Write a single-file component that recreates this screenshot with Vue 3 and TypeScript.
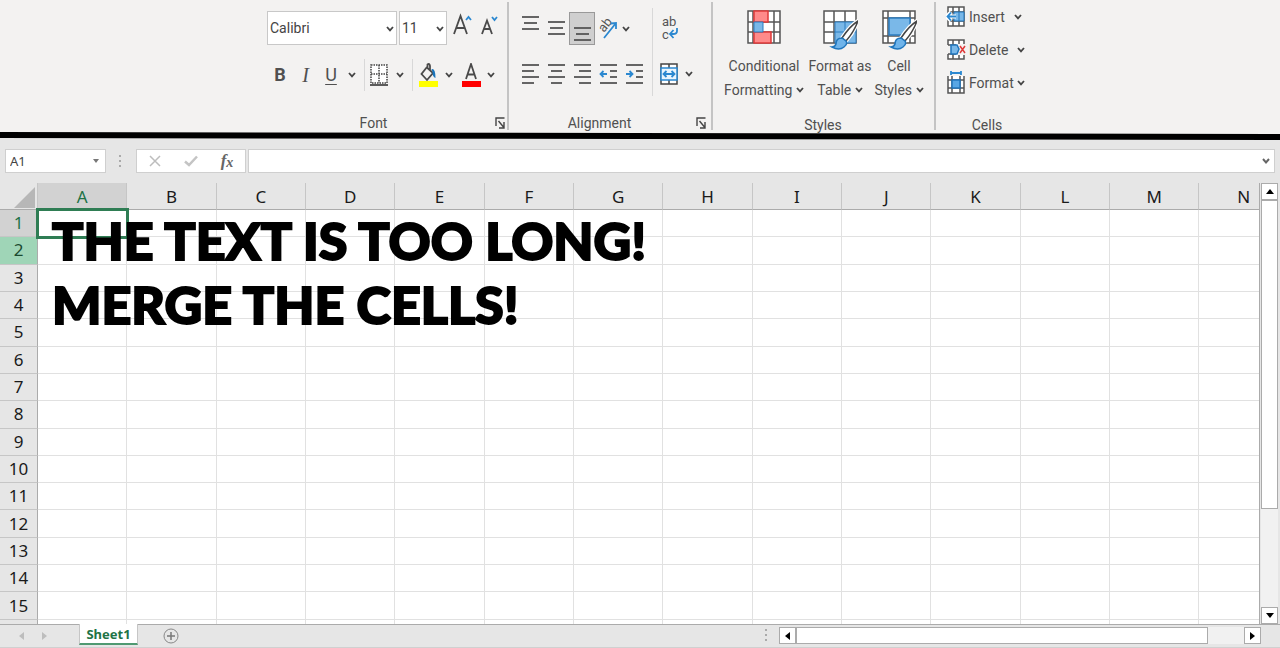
<script setup lang="ts">
import { h, ref } from 'vue'

type Bar = [x1: number, x2: number, y: number]

const Chevron = () =>
  h('svg', { class: 'chev', viewBox: '0 0 8 6', 'aria-hidden': 'true' }, [h('path', { d: 'M1 1l3 3.4L7 1' })])

const Lines = (props: { bars: Bar[]; arrow?: string }) =>
  h('svg', { class: 'lines', viewBox: '0 0 18 34', 'aria-hidden': 'true' }, [
    ...props.bars.map(([a, b, y]) => h('path', { d: `M${a} ${y}H${b}` })),
    props.arrow ? h('path', { d: props.arrow, stroke: '#2b88d0' }) : null,
  ])
Lines.props = ['bars', 'arrow']

const Launcher = () =>
  h('svg', { class: 'launcher', viewBox: '0 0 10 12', 'aria-hidden': 'true' }, [
    h('path', { d: 'M1 9V1H9.5M3.5 4L8.5 10M9 5V11H4' }),
  ])

const vertical: { label: string; on?: boolean; bars: Bar[] }[] = [
  { label: 'Top Align', bars: [[1, 18, 5], [3, 16, 11], [1, 18, 17]] },
  { label: 'Middle Align', bars: [[1, 18, 10], [3, 16, 16], [1, 18, 22]] },
  { label: 'Bottom Align', on: true, bars: [[1, 18, 16], [3, 16, 22], [1, 18, 28]] },
]

const horizontal: { label: string; arrow?: string; bars: Bar[] }[] = [
  { label: 'Align Left', bars: [[1, 18, 7], [1, 13, 13], [1, 18, 19], [1, 13, 25]] },
  { label: 'Center', bars: [[1, 18, 7], [4, 15, 13], [1, 18, 19], [4, 15, 25]] },
  { label: 'Align Right', bars: [[1, 18, 7], [6, 18, 13], [1, 18, 19], [6, 18, 25]] },
  { label: 'Decrease Indent', arrow: 'M1.5 16H8M4.5 13L1.5 16L4.5 19', bars: [[1, 18, 7], [11, 18, 13], [11, 18, 19], [1, 18, 25]] },
  { label: 'Increase Indent', arrow: 'M1 16H7.5M4.5 13L7.5 16L4.5 19', bars: [[1, 18, 7], [11, 18, 13], [11, 18, 19], [1, 18, 25]] },
]

const columns = 'ABCDEFGHIJKLMN'.split('')
const rows = Array.from({ length: 16 }, (_, i) => i + 1)

const font = ref('Calibri')
const size = ref('11')
const cell = ref('A1')
const formula = ref('')
</script>

<template>
  <div class="app">
    <header class="ribbon">
      <section class="group font">
        <div class="row font-top">
          <label class="pick">
            <select v-model="font" aria-label="Font"><option>Calibri</option></select>
            <Chevron />
          </label>
          <label class="pick">
            <select v-model="size" aria-label="Font size"><option>11</option></select>
            <Chevron />
          </label>
          <button class="grow" aria-label="Increase font size">
            <svg width="20" height="34" viewBox="0 0 20 34"><path class="ink" d="M2 23L8.500 5L15 23M4.500 17H12.500" /><path class="blue" d="M14 9l2.500-3 2.500 3" /></svg>
          </button>
          <button class="grow" aria-label="Decrease font size">
            <svg width="20" height="34" viewBox="0 0 20 34"><path class="ink" d="M2 23L7 9.500L12 23M4 18H10" /><path class="blue" d="M12 6l2.500 3 2.500-3" /></svg>
          </button>
        </div>
        <div class="row font-bottom">
          <button class="b">B</button>
          <button class="i">I</button>
          <button class="u">U</button>
          <button aria-label="Underline options"><Chevron /></button>
          <span class="sep"></span>
          <button aria-label="Borders">
            <svg width="20" height="24" viewBox="0 0 20 24">
              <path d="M2 2H18V20H2ZM10 2V20M2 11H18" fill="#fff" stroke="#444" stroke-width="1.500" stroke-dasharray="1.500 1" />
              <path class="ink" d="M1 22H19" />
            </svg>
          </button>
          <button aria-label="Border options"><Chevron /></button>
          <span class="sep"></span>
          <button aria-label="Fill color">
            <svg width="20" height="24" viewBox="0 0 20 24">
              <path class="ink" d="M9 4L3.500 11L9 17L15 10L9.500 5V1.500Q11.500 0 12 3V8" />
              <path d="M13.500 6Q17.500 5 17.500 15Q14.500 14 14.500 9Z" fill="#1b75bb" />
              <rect x="1" y="18" width="19" height="6" fill="#ff0" />
            </svg>
          </button>
          <button aria-label="Fill color options"><Chevron /></button>
          <button aria-label="Font color">
            <svg width="20" height="24" viewBox="0 0 20 24">
              <path class="ink" d="M5 16L10 1L15 16M6.500 11.500H13.500" />
              <rect x="1" y="18" width="19" height="6" fill="#f00" />
            </svg>
          </button>
          <button aria-label="Font color options"><Chevron /></button>
        </div>
        <footer><span>Font</span><button aria-label="Font settings"><Launcher /></button></footer>
      </section>

      <section class="group align">
        <div class="align-body">
          <div class="align-main">
            <div class="row align-top">
              <button v-for="v in vertical" :key="v.label" :aria-label="v.label" :class="{ on: v.on }"><Lines :bars="v.bars" /></button>
              <button aria-label="Orientation">
                <svg class="open" width="20" height="26" viewBox="0 0 20 26">
                  <text x="0" y="0" transform="translate(6 17) rotate(-52)" class="glyph">ab</text>
                  <path class="blue" d="M6 22L18 7M12.500 7.500L18 7V13" />
                </svg>
              </button>
              <button aria-label="Orientation options"><Chevron /></button>
            </div>
            <div class="row align-bottom">
              <button v-for="a in horizontal" :key="a.label" :aria-label="a.label"><Lines :bars="a.bars" :arrow="a.arrow" /></button>
            </div>
          </div>
          <span class="sep tall"></span>
          <div class="align-side">
            <div class="row">
              <button aria-label="Wrap Text">
                <svg class="open" width="20" height="28" viewBox="0 0 20 28">
                  <text x="3" y="12" class="glyph">ab</text><text x="3" y="25" class="glyph">c</text>
                  <path class="blue" d="M18 14V17Q18 20 14 20H11M14.500 16L11 20L14.500 24" />
                </svg>
              </button>
            </div>
            <div class="row">
              <button aria-label="Merge and Center">
                <svg width="20" height="24" viewBox="0 0 20 24">
                  <path d="M2 2H18V22H2ZM10 2V22" fill="#fff" stroke="#444" stroke-width="1.500" />
                  <path d="M2 6H18V18H2Z" fill="#eaf5fd" stroke="#2b88d0" stroke-width="1.500" />
                  <path class="blue" d="M4.500 12H15.500M7.500 9L4.500 12L7.500 15M12.500 9L15.500 12L12.500 15" />
                </svg>
              </button>
              <button aria-label="Merge options"><Chevron /></button>
            </div>
          </div>
        </div>
        <footer><span>Alignment</span><button aria-label="Alignment settings"><Launcher /></button></footer>
      </section>

      <section class="group styles">
        <div class="styles-body">
          <button>
            <svg width="36" height="42" viewBox="0 0 36 42">
              <path class="grid" d="M2 2H34V34H2ZM7 2V34M28 2V34M2 13H34M2 23H34" />
              <path d="M8 2H22V13H8Z M8 23H25V34H8Z" fill="#ff8a8a" stroke="#e03a3a" stroke-width="1.500" />
              <path d="M8 13H17V23H8Z" fill="#7ab8e8" stroke="#2b7cc0" />
            </svg>
            <span>Conditional<br>Formatting <Chevron /></span>
          </button>
          <button>
            <svg width="36" height="42" viewBox="0 0 36 42">
              <path class="grid" d="M2 2H34V34H2ZM12 2V34M23 2V34M2 13H34M2 23H34" />
              <path d="M13 13H34V34H13Z" fill="#7ab8e8" stroke="#2b7cc0" /><path d="M23 13V34M13 23H34" stroke="#2b7cc0" />
              <path d="M36 12Q28 17 20 29L24 32Q32 23 36 12Z" fill="#fff" stroke="#fff" stroke-width="4" />
              <path class="brush" d="M36 12Q28 17 20 29L24 32Q32 23 36 12Z" />
              <path d="M20 29Q14 29 14 35Q13 38 10 38Q17 42 22 38Q26 35 24 32Z" fill="#6fb4ea" stroke="#2076bd" stroke-width="1.500" />
            </svg>
            <span>Format as<br>Table <Chevron /></span>
          </button>
          <button>
            <svg width="36" height="42" viewBox="0 0 36 42">
              <path class="grid" d="M2 2H34V34H2ZM7 2V34M29 2V34M2 9H34M2 27H34" />
              <path d="M8 9H29V26H8Z" fill="#7ab8e8" stroke="#2b7cc0" stroke-width="1.500" />
              <path d="M36 12Q28 17 20 29L24 32Q32 23 36 12Z" fill="#fff" stroke="#fff" stroke-width="4" />
              <path class="brush" d="M36 12Q28 17 20 29L24 32Q32 23 36 12Z" />
              <path d="M20 29Q14 29 14 35Q13 38 10 38Q17 42 22 38Q26 35 24 32Z" fill="#6fb4ea" stroke="#2076bd" stroke-width="1.500" />
            </svg>
            <span>Cell<br>Styles <Chevron /></span>
          </button>
        </div>
        <footer><span>Styles</span></footer>
      </section>

      <section class="group cells">
        <div class="cells-body">
          <button>
            <svg width="20" height="24" viewBox="0 0 20 24">
              <path class="grid" d="M2 2H18V21H2ZM7 2V21M13 2V21M2 7H18M2 16H18" />
              <path d="M8 7H18V16H8Z" fill="#7ab8e8" stroke="#2076bd" /><path d="M13 7V16" stroke="#2076bd" />
              <path d="M10 11.500H1M5 7L1 11.500L5 16" fill="none" stroke="#fff" stroke-width="4" />
              <path class="blue" d="M10 11.500H1.500M5 7.500L1.500 11.500L5 15.500" />
            </svg>
            <span>Insert</span><Chevron />
          </button>
          <button>
            <svg width="20" height="24" viewBox="0 0 20 24">
              <path class="grid" d="M2 7V2H18V6M7 2V7M13 2V6M2 7H10M2 16V21H18V17M7 16V21M13 17V21M2 16H10" />
              <path d="M5 7H11L13 11L11 16H5Z" fill="#7ab8e8" stroke="#2076bd" stroke-width="1.500" />
              <path d="M14 8L19 15M19 8L14 15" stroke="#e03a3a" stroke-width="1.500" />
            </svg>
            <span>Delete</span><Chevron />
          </button>
          <button class="near">
            <svg width="20" height="24" viewBox="0 0 20 24">
              <path class="grid" d="M2 5V22H18V5M6 5V22M14 5V22M2 9H18M2 17H18" />
              <path d="M6 9H14V17H6Z" fill="#58a6e4" stroke="#2076bd" stroke-width="1.500" />
              <path class="blue" d="M5 2H15M5 0V4M15 0V4" />
            </svg>
            <span>Format</span><Chevron />
          </button>
        </div>
        <footer><span>Cells</span></footer>
      </section>
    </header>

    <svg class="rule" viewBox="0 0 1280 8" preserveAspectRatio="none" aria-hidden="true">
      <path d="M0 0H1280V2L0 0Z" fill="#f3f2f1" /><path d="M0 0L1280 2V8L0 6Z" fill="#000" />
    </svg>

    <div class="formula-bar">
      <div class="name-box">
        <input v-model="cell" aria-label="Name box">
        <button aria-label="Show names"><svg width="6" height="4" viewBox="0 0 6 4"><path d="M0 0H6L3 4Z" fill="#777" /></svg></button>
      </div>
      <span class="dots"></span>
      <div class="fx-box">
        <button aria-label="Cancel"><svg width="12" height="12" viewBox="0 0 12 12"><path d="M1 1L11 11M11 1L1 11" stroke="#bdbdbd" stroke-width="1.500" /></svg></button>
        <button aria-label="Enter"><svg width="14" height="12" viewBox="0 0 14 12"><path d="M1 6.500L5 10L13 1.500" fill="none" stroke="#c4c4c4" stroke-width="2.500" /></svg></button>
        <button class="fx" aria-label="Insert function">f<small>x</small></button>
      </div>
      <div class="formula">
        <input v-model="formula" aria-label="Formula bar">
        <button aria-label="Expand formula bar"><Chevron /></button>
      </div>
    </div>

    <main class="sheet">
      <div class="cells-view">
        <table>
          <colgroup><col class="num"><col v-for="c in columns" :key="c"></colgroup>
          <thead>
            <tr>
              <th class="corner"><svg width="21" height="21" viewBox="0 0 21 21"><path d="M21 0V21H0Z" fill="#b7b7b7" /></svg></th>
              <th v-for="c in columns" :key="c" scope="col" :class="{ active: c === 'A' }">{{ c }}</th>
            </tr>
          </thead>
          <tbody>
            <tr v-for="r in rows" :key="r">
              <th scope="row" :class="{ active: r === 1, hover: r === 2 }">{{ r < 16 ? r : '' }}</th>
              <td v-for="c in columns" :key="c" :class="{ selected: r === 1 && c === 'A' }"></td>
            </tr>
          </tbody>
        </table>
        <p class="note">THE TEXT IS TOO LONG!<br>MERGE THE CELLS!</p>
      </div>
      <div class="vscroll">
        <button aria-label="Scroll up"><svg width="8" height="5" viewBox="0 0 8 5"><path d="M4 0L8 5H0Z" /></svg></button>
        <div class="vtrack"><div class="vthumb"></div></div>
        <button aria-label="Scroll down"><svg width="8" height="5" viewBox="0 0 8 5"><path d="M4 5L8 0H0Z" /></svg></button>
      </div>
    </main>

    <footer class="tabs">
      <div class="tab-nav">
        <button aria-label="Previous sheet"><svg width="5" height="8" viewBox="0 0 5 8"><path d="M5 0V8L0 4Z" fill="#bdbdbd" /></svg></button>
        <button aria-label="Next sheet"><svg width="5" height="8" viewBox="0 0 5 8"><path d="M0 0V8L5 4Z" fill="#bdbdbd" /></svg></button>
      </div>
      <button class="tab">Sheet1</button>
      <button class="add" aria-label="New sheet">
        <svg width="16" height="16" viewBox="0 0 16 16"><circle cx="8" cy="8" r="7" fill="none" stroke="#888" /><path d="M8 4V12M4 8H12" stroke="#777" stroke-width="1.500" /></svg>
      </button>
      <span class="dots"></span>
      <div class="hscroll">
        <button aria-label="Scroll left"><svg width="5" height="8" viewBox="0 0 5 8"><path d="M5 0V8L0 4Z" /></svg></button>
        <div class="htrack"><div class="hthumb"></div></div>
        <button aria-label="Scroll right"><svg width="5" height="8" viewBox="0 0 5 8"><path d="M0 0V8L5 4Z" /></svg></button>
      </div>
    </footer>
  </div>
</template>

<style>
body { margin: 0; background: #e6e6e6; }
</style>

<style scoped>
* { box-sizing: border-box; }
.app {
  display: flex;
  flex-direction: column;
  height: 100vh;
  overflow: hidden;
  background: #e6e6e6;
  font-family: "Noto Sans", "Open Sans", sans-serif;
  color: #1a1a1a;
}
button {
  display: flex;
  align-items: center;
  justify-content: center;
  margin: 0;
  padding: 0;
  border: 0;
  background: none;
  font: inherit;
  color: inherit;
}
svg { display: block; flex: none; }
.open { overflow: visible; }
.chev { width: 8px; height: 6px; fill: none; stroke: #444; stroke-width: 1.8; }
.lines { width: 18px; height: 34px; fill: none; stroke: #555; stroke-width: 1.8; }
.launcher { width: 10px; height: 12px; fill: none; stroke: #444; stroke-width: 1.4; }
.ink { fill: none; stroke: #4a4a4a; stroke-width: 1.8; }
.blue { fill: none; stroke: #2b88d0; stroke-width: 1.8; }
.grid { fill: #fff; stroke: #555; stroke-width: 1.5; }
.brush { fill: #fff; stroke: #444; stroke-width: 1.5; }
.glyph { font-size: 13px; line-height: 13px; fill: #555; }

/* Ribbon */
.ribbon {
  display: flex;
  flex: none;
  height: 132px;
  padding-left: 258px;
  background: #f3f2f1;
  font-family: Roboto, "Open Sans", sans-serif;
  font-size: 14px;
  line-height: 24px;
  color: #505050;
}
.group { display: flex; flex-direction: column; flex: none; margin: 2px 0; border-right: 2px solid #c4c4c4; }
.group footer { display: flex; justify-content: center; align-items: center; margin: auto 0 -3px; height: 20px; position: relative; }
.group footer button { position: absolute; right: 2px; top: 4px; }
.row { display: flex; height: 34px; }
.sep { justify-self: center; width: 1px; height: 32px; background: #d8d8d8; }
.font { width: 251px; padding: 9px 0 0 9px; }
.font footer { padding-right: 27px; }
.font-top { gap: 2px; }
.pick { position: relative; }
.pick select {
  width: 130px;
  height: 34px;
  padding: 0 2px;
  border: 1px solid #c8c8c8;
  border-radius: 0;
  background: #fff;
  appearance: none;
  font: inherit;
  color: #444;
}
.pick + .pick select { width: 48px; }
.pick .chev { position: absolute; right: 3px; top: 15px; }
.grow { width: 26px; }
.font-bottom {
  display: grid;
  grid-template-columns: 26px 25px 26px 15px 10px 20px 22px 3px 28px 14px 30px 10px;
  align-items: center;
  margin-top: 13px;
  height: 34px;
}
.font-bottom button { height: 34px; font-size: 18px; }
.b { font-weight: 700; }
.font-bottom .i { font-family: "Liberation Serif", serif; font-size: 20px; font-style: italic; }
.u { text-decoration: underline; text-underline-offset: 3px; }

.align { width: 204px; padding: 6px 0 0 8px; }
.align footer { padding-right: 29px; }
.align footer button { right: 5px; }
.align-body { display: flex; }
.align-main { display: flex; flex-direction: column; gap: 12px; width: 130px; padding-top: 4px; }
.align-top button, .align-bottom button { width: 26px; height: 34px; flex: none; }
.align-top button:nth-child(5) { width: 10px; }
.align-top .on { background: #cfcfcf; border: 1px solid #999; height: 33px; }
.sep.tall { height: 88px; margin: 0 6px 0 5px; }
.align-side { display: flex; flex-direction: column; gap: 12px; padding-top: 3px; }
.align-side .row { gap: 6px; align-items: center; }

.styles { width: 223px; padding: 7px 0 0 6px; }
.styles footer, .cells footer { margin-bottom: -5px; }
.styles footer { padding-right: 7px; }
.styles-body { display: grid; grid-template-columns: 90px 62px 56px; }
.styles-body button { flex-direction: column; gap: 3px; white-space: nowrap; }
.styles-body .chev { display: inline-block; vertical-align: 2px; }
.cells { width: 104px; padding-left: 10px; border-right: 0; }
.cells footer { padding-right: 12px; }
.cells-body { display: flex; flex-direction: column; align-items: flex-start; gap: 9px; padding-top: 3px; }
.cells-body button { gap: 3px; white-space: nowrap; }
.cells-body .chev { margin-left: 6px; }
.cells-body .near .chev { margin-left: 0; }

.rule { width: 100%; height: 8px; flex: none; }

/* Formula bar */
.formula-bar { display: flex; flex: none; height: 43px; padding: 9px 5px 10px; }
.name-box, .fx-box, .formula { display: flex; align-items: center; background: #fff; border: 1px solid #cfcfcf; }
.name-box { width: 101px; }
.name-box button { width: 18px; }
input { flex: 1; min-width: 0; width: 0; height: 20px; padding: 0 4px; border: 0; outline: 0; background: none; font: 13px "Noto Sans", sans-serif; color: #444; }
.dots { width: 2px; height: 12px; margin: 6px 15px 0 13px; background: repeating-linear-gradient(#aaa 0 2px, transparent 2px 5px); }
.fx-box { width: 110px; margin-right: 2px; }
.fx-box button { flex: 1; }
.fx-box .fx { font: italic 700 17px "Liberation Serif", serif; color: #666; }
.fx small { font-size: 14px; padding-top: 3px; }
.formula { flex: 1; }
.formula button { width: 16px; }
.formula .chev { stroke: #666; stroke-width: 2; }

/* Worksheet */
.sheet { display: flex; flex: 1; min-height: 0; }
.cells-view { position: relative; flex: 1; min-width: 0; overflow: hidden; border-right: 1px solid #ababab; background: #fff; }
table { width: calc(100% + 30px); height: calc(100vh - 184px); table-layout: fixed; border-collapse: separate; border-spacing: 0; }
.num { width: 38px; }
th { padding: 0; background: #e6e6e6; font-size: 17px; line-height: 24px; font-weight: 400; border-right: 1px solid #c6c6c6; border-bottom: 1px solid #c6c6c6; }
thead th { height: 27px; border-bottom-color: #ababab; padding-top: 2px; }
tbody th { border-right-color: #ababab; }
tbody th, td { height: 27px; }
td { padding: 0; border-right: 1px solid #e1e1e1; border-bottom: 1px solid #e1e1e1; }
th.active { background: #d2d2d2; color: #217346; }
th.hover { background: #9fd5b7; color: #1b4a30; }
.corner svg { margin-left: 14px; }
.selected { outline: 3px solid #2f7d54; outline-offset: -1px; }
.note {
  position: absolute;
  left: 52px;
  top: 25px;
  margin: 0;
  font: 900 52px/64px Lato, Inter, sans-serif;
  color: #000;
  white-space: nowrap;
  -webkit-text-stroke: 2px #000;
}

.vscroll { display: flex; flex-direction: column; width: 20px; padding: 0 2px 0 1px; background: #e6e6e6; }
.vscroll button, .hscroll button { width: 17px; height: 17px; flex: none; border: 1px solid #ababab; background: #fff; }
.vtrack { flex: 1; background: #f1f1f1; }
.vthumb { height: 76%; background: #fff; border: 1px solid #ababab; }

/* Sheet tabs */
.tabs { display: flex; flex: none; height: 24px; border-top: 1px solid #ababab; border-bottom: 1px solid #d0d0d0; padding-right: 19px; }
.tab-nav { display: flex; align-items: center; gap: 18px; width: 79px; padding-left: 19px; }
.tab { width: 59px; height: 21px; margin-top: -1px; background: #fff; border: 1px solid #c6c6c6; border-top: 0; border-bottom: 2px solid #4f9a72; font-size: 13px; font-weight: 700; color: #217346; }
.add { margin-left: 25px; }
.tabs .dots { margin: 4px 12px 0 auto; }
.hscroll { display: flex; width: 482px; margin-top: 2px; }
.htrack { flex: 1; height: 17px; background: #f1f1f1; }
.hthumb { width: 92%; height: 17px; background: #fff; border: 1px solid #ababab; }
</style>
